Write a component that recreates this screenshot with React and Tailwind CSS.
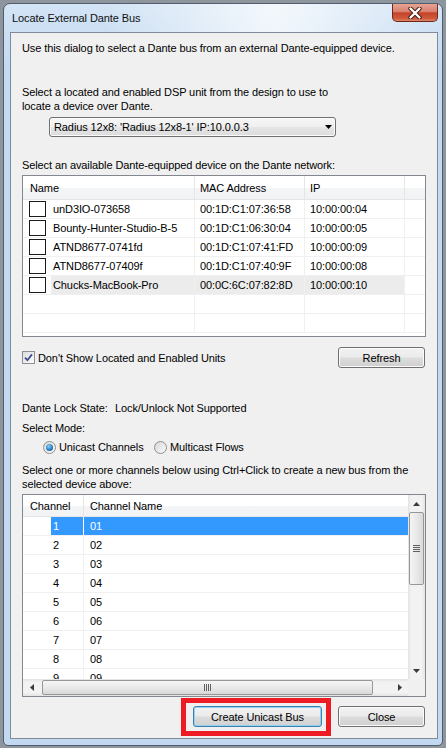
import React from 'react';

const devices = [
  { name: 'unD3IO-073658', mac: '00:1D:C1:07:36:58', ip: '10:00:00:04' },
  { name: 'Bounty-Hunter-Studio-B-5', mac: '00:1D:C1:06:30:04', ip: '10:00:00:05' },
  { name: 'ATND8677-0741fd', mac: '00:1D:C1:07:41:FD', ip: '10:00:00:09' },
  { name: 'ATND8677-07409f', mac: '00:1D:C1:07:40:9F', ip: '10:00:00:08' },
  { name: 'Chucks-MacBook-Pro', mac: '00:0C:6C:07:82:8D', ip: '10:00:00:10', hot: true },
];

const channels = [1, 2, 3, 4, 5, 6, 7, 8, 9].map((n) => ({ num: n, name: '0' + n }));

// small black triangles used by scrollbars and the combo box
function Arrow({ dir = 'down', className = '' }) {
  const pts = {
    up: '0,4 3.5,0 7,4',
    down: '0,0 7,0 3.5,4',
    left: '4,0 4,7 0,3.5',
    right: '0,0 0,7 4,3.5',
  }[dir];
  const vertical = dir === 'up' || dir === 'down';
  return (
    <svg width={vertical ? 7 : 4} height={vertical ? 4 : 7} className={className}>
      <polygon points={pts} fill="currentColor" />
    </svg>
  );
}

function WinButton({ children, primary, className = '' }) {
  return (
    <div
      className={`h-[21px] flex items-center justify-center rounded-[3px] border ${
        primary
          ? 'border-[#3c7fb1] shadow-[inset_0_0_0_1px_#8fd3f5]'
          : 'border-[#707070] shadow-[inset_0_0_0_1px_#fbfbfb]'
      } bg-[linear-gradient(to_bottom,#f2f2f2_0%,#ebebeb_48%,#dddddd_52%,#cfcfcf_100%)] ${className}`}
    >
      {children}
    </div>
  );
}

function DeviceList() {
  return (
    <div className="mt-[3px] h-[162px] border border-[#828790] bg-white overflow-hidden">
      {/* column header */}
      <div className="flex h-[24px] border-b border-[#e5e5e5] bg-[linear-gradient(to_bottom,#ffffff_0%,#ffffff_50%,#f4f5f7_52%,#f2f3f5_100%)]">
        <div className="w-[172px] flex items-center pl-[7px] border-r border-[#e5e5e5]">Name</div>
        <div className="w-[110px] flex items-center pl-[5px] border-r border-[#e5e5e5]">MAC Address</div>
        <div className="w-[100px] flex items-center pl-[5px] border-r border-[#e5e5e5]">IP</div>
        <div className="flex-1" />
      </div>
      {devices.map((d) => (
        <div key={d.name} className="flex h-[19px] border-b border-[#f0f0f0]">
          <div className="w-[172px] flex border-r border-[#f0f0f0]">
            <div className="flex items-center pl-[6px] pr-[5px]">
              <div className="w-[17px] h-[16px] border border-[#1a1a1a] bg-white" />
            </div>
            <div className={`flex-1 flex items-center pl-[2px] ${d.hot ? 'bg-[#ececec]' : ''}`}>{d.name}</div>
          </div>
          <div className={`w-[110px] flex items-center pl-[5px] border-r border-[#f0f0f0] ${d.hot ? 'bg-[#ececec]' : ''}`}>
            {d.mac}
          </div>
          <div className={`w-[100px] flex items-center pl-[5px] border-r border-[#f0f0f0] ${d.hot ? 'bg-[#ececec]' : ''}`}>
            {d.ip}
          </div>
          <div className="flex-1" />
        </div>
      ))}
      {[0, 1].map((i) => (
        <div key={i} className="flex h-[19px] border-b border-[#f0f0f0]">
          <div className="w-[172px] border-r border-[#f0f0f0]" />
          <div className="w-[110px] border-r border-[#f0f0f0]" />
          <div className="w-[100px] border-r border-[#f0f0f0]" />
          <div className="flex-1" />
        </div>
      ))}
    </div>
  );
}

function ChannelList() {
  return (
    <div className="mt-[3px] h-[203px] border border-[#828790] bg-white grid grid-cols-[1fr_17px] grid-rows-[1fr_17px] overflow-hidden">
      <div className="overflow-hidden">
        <div className="flex h-[22px] border-b border-[#e5e5e5] bg-[linear-gradient(to_bottom,#ffffff_0%,#ffffff_50%,#f4f5f7_52%,#f2f3f5_100%)]">
          <div className="w-[61px] flex items-center pl-[7px] border-r border-[#e5e5e5]">Channel</div>
          <div className="flex-1 flex items-center pl-[6px]">Channel Name</div>
        </div>
        {channels.map((c, i) => {
          const sel = i === 0;
          return (
            <div key={c.num} className="flex h-[19px] border-b border-[#f0f0f0]">
              <div className="w-[28px]" />
              <div
                className={`w-[33px] flex items-center pl-[2px] border-r ${
                  sel ? 'bg-[#3399ff] text-white border-white' : 'border-[#f0f0f0]'
                }`}
              >
                {c.num}
              </div>
              <div className={`flex-1 flex items-center pl-[6px] ${sel ? 'bg-[#3399ff] text-white' : ''}`}>{c.name}</div>
            </div>
          );
        })}
      </div>

      {/* vertical scrollbar */}
      <div className="flex flex-col bg-[linear-gradient(to_right,#e3e3e3,#f2f2f2_20%,#f2f2f2_80%,#e3e3e3)]">
        <div className="h-[17px] flex items-center justify-center text-[#3a3a3a]">
          <Arrow dir="up" />
        </div>
        <div className="mx-[1px] h-[73px] rounded-[2px] border border-[#979797] bg-[linear-gradient(to_right,#f5f5f5,#e9e9e9_50%,#d9d9d9)] flex flex-col items-center justify-center gap-[1px]">
          {[0, 1, 2, 3].map((i) => (
            <div key={i} className="w-[7px] h-[1px] bg-[#5f5f5f]" />
          ))}
        </div>
        <div className="flex-1" />
        <div className="h-[17px] flex items-center justify-center text-[#3a3a3a]">
          <Arrow dir="down" />
        </div>
      </div>

      {/* horizontal scrollbar */}
      <div className="flex items-stretch bg-[linear-gradient(to_bottom,#e3e3e3,#f2f2f2_20%,#f2f2f2_80%,#e3e3e3)]">
        <div className="w-[17px] flex items-center justify-center text-[#3a3a3a]">
          <Arrow dir="left" />
        </div>
        <div className="ml-[2px] w-[331px] my-[1px] rounded-[2px] border border-[#979797] bg-[linear-gradient(to_bottom,#f5f5f5,#e9e9e9_50%,#d9d9d9)] flex items-center justify-center gap-[1px]">
          {[0, 1, 2, 3].map((i) => (
            <div key={i} className="w-[1px] h-[7px] bg-[#5f5f5f]" />
          ))}
        </div>
        <div className="flex-1" />
        <div className="w-[17px] flex items-center justify-center text-[#3a3a3a]">
          <Arrow dir="right" />
        </div>
      </div>
      <div className="bg-[#f0f0f0]" />
    </div>
  );
}

function Radio({ checked }) {
  return (
    <div className="w-[13px] h-[13px] rounded-full border border-[#8e8f8f] bg-[linear-gradient(135deg,#d8d8d8,#fafafa)] flex items-center justify-center">
      {checked && (
        <div className="w-[7px] h-[7px] rounded-full bg-[radial-gradient(circle_at_40%_35%,#8fd0f5,#2a7fc2_55%,#0d4f8a)]" />
      )}
    </div>
  );
}

export default function App() {
  return (
    <div className="w-[446px] h-[748px] bg-[#8e959c] overflow-hidden whitespace-nowrap font-['Liberation_Sans',Arial,sans-serif] text-[11px] tracking-[-0.1px] leading-[14px] text-black">
      {/* window frame */}
      <div className="ml-[3px] mt-[3px] w-[440px] h-[743px] rounded-t-[7px] rounded-b-[5px] border border-[#4f5d6d] pl-[6px] pr-[4px] flex flex-col bg-[radial-gradient(ellipse_at_62%_0%,rgba(255,255,255,0.75),rgba(255,255,255,0)_45%),linear-gradient(to_bottom,#d3e4f5,#c4daf1_60px,#c2d9f1)]">
        {/* title bar */}
        <div className="h-[28px] flex items-start">
          <div className="pl-[2px] h-[28px] flex items-center text-[#101010]">Locate External Dante Bus</div>
          <div className="ml-auto w-[46px] h-[18px] rounded-b-[5px] border border-t-0 border-[#6b2a1c] bg-[linear-gradient(to_bottom,#e7a495_0%,#d9806e_45%,#c5432a_52%,#cf5a3c_85%,#e0876a_100%)] flex items-center justify-center">
            <svg width="14" height="12" viewBox="0 0 14 12">
              <path d="M2.5 1.5 L11.5 10.5 M11.5 1.5 L2.5 10.5" stroke="#3b1810" strokeWidth="4.2" strokeLinecap="round" />
              <path d="M2.5 1.5 L11.5 10.5 M11.5 1.5 L2.5 10.5" stroke="#ffffff" strokeWidth="2.4" strokeLinecap="round" />
            </svg>
          </div>
        </div>

        {/* client area */}
        <div className="w-[428px] h-[707px] border border-[#7d8b9b] bg-[#f0f0f0] px-[11px] flex flex-col">
          <div className="mt-[8px]">Use this dialog to select a Dante bus from an external Dante-equipped device.</div>

          <div className="mt-[30px]">
            Select a located and enabled DSP unit from the design to use to
            <br />
            locate a device over Dante.
          </div>

          <div className="ml-[27px] mt-[4px] w-[287px] h-[20px] rounded-[3px] border border-[#707070] shadow-[inset_0_0_0_1px_#fbfbfb] bg-[linear-gradient(to_bottom,#f7f7f7_0%,#efefef_48%,#e5e5e5_52%,#dcdcdc_100%)] flex items-center pl-[4px] pr-[3px]">
            <span>Radius 12x8: 'Radius 12x8-1' IP:10.0.0.3</span>
            <Arrow dir="down" className="ml-auto text-black" />
          </div>

          <div className="mt-[21px]">Select an available Dante-equipped device on the Dante network:</div>
          <DeviceList />

          <div className="mt-[10px] h-[21px] flex items-center">
            <div className="w-[13px] h-[13px] border border-[#8f8f8f] bg-[linear-gradient(135deg,#dcdcdc,#fdfdfd)] flex items-center justify-center">
              <svg width="9" height="9" viewBox="0 0 9 9">
                <path d="M1 4.6 L3.4 7.2 L8 1.4" fill="none" stroke="#3c4f8c" strokeWidth="1.8" />
              </svg>
            </div>
            <span className="ml-[3px]">Don't Show Located and Enabled Units</span>
            <WinButton className="ml-auto mr-[1px] w-[87px]">Refresh</WinButton>
          </div>

          <div className="mt-[33px] flex">
            <span className="w-[93px]">Dante Lock State:</span>
            <span>Lock/Unlock Not Supported</span>
          </div>
          <div className="mt-[6px]">Select Mode:</div>
          <div className="mt-[5px] ml-[21px] flex items-center h-[14px]">
            <div className="w-[111px] flex items-center">
              <Radio checked />
              <span className="ml-[3px]">Unicast Channels</span>
            </div>
            <Radio />
            <span className="ml-[3px]">Multicast Flows</span>
          </div>

          <div className="mt-[9px]">
            Select one or more channels below using Ctrl+Click to create a new bus from the
            <br />
            selected device above:
          </div>
          <ChannelList />

          <div className="mt-[9px] flex justify-end gap-[16px] pr-[1px]">
            <div className="relative">
              <WinButton primary className="w-[129px]">Create Unicast Bus</WinButton>
              {/* red callout box */}
              <div className="absolute left-[-12px] top-[-8px] w-[150px] h-[38px] border-[5px] border-[#ed1c24]" />
            </div>
            <WinButton className="w-[87px]">Close</WinButton>
          </div>
        </div>
      </div>
    </div>
  );
}
